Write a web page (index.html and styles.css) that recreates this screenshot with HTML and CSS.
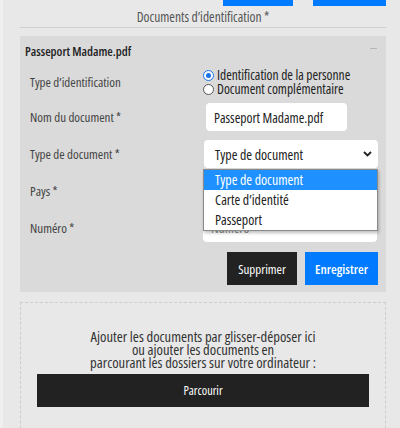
FILE: index.html
```html
<!DOCTYPE html>
<html lang="fr">
<head>
<meta charset="utf-8">
<title>Documents</title>
<link rel="stylesheet" href="styles.css">
</head>
<body>
<div class="page">
  <div class="top-actions">
    <span class="top-btn top-btn-a"></span>
    <span class="top-btn top-btn-b"></span>
  </div>
  <div class="section-title">Documents d’identification *</div>
  <div class="rule"></div>

  <div class="card">
    <div class="card-head">
      <span class="card-name">Passeport Madame.pdf</span>
      <span class="collapse"></span>
    </div>
    <div class="form">
      <div class="row row-radio">
        <div class="label">Type d’identification</div>
        <div class="control radios">
          <label class="radio"><span class="dot checked"></span>Identification de la personne</label>
          <label class="radio"><span class="dot"></span>Document complémentaire</label>
        </div>
      </div>
      <div class="row row-first">
        <div class="label">Nom du document *</div>
        <div class="control"><div class="input input-short">Passeport Madame.pdf</div></div>
      </div>
      <div class="row">
        <div class="label">Type de document *</div>
        <div class="control select-wrap">
          <div class="input select">Type de document
            <svg class="chev" width="9" height="6" viewBox="0 0 9 6"><path d="M1 1 L4.5 4.5 L8 1" fill="none" stroke="#222" stroke-width="1.8"/></svg>
          </div>
          <ul class="dropdown">
            <li class="opt active">Type de document</li>
            <li class="opt">Carte d’identité</li>
            <li class="opt">Passeport</li>
          </ul>
        </div>
      </div>
      <div class="row">
        <div class="label">Pays *</div>
        <div class="control"><div class="input input-full"></div></div>
      </div>
      <div class="row">
        <div class="label">Numéro *</div>
        <div class="control"><div class="input input-full placeholder">Numéro</div></div>
      </div>
    </div>
    <div class="actions">
      <button class="btn btn-dark">Supprimer</button>
      <button class="btn btn-blue">Enregistrer</button>
    </div>
  </div>

  <div class="dropzone">
    <p class="drop-text">Ajouter les documents par glisser-déposer ici<br>ou ajouter les documents en<br>parcourant les dossiers sur votre ordinateur :</p>
    <button class="btn btn-dark btn-wide">Parcourir</button>
  </div>
</div>
</body>
</html>
```

FILE: styles.css
```css
html, body {
  margin: 0;
  padding: 0;
  height: 100%;
  overflow: hidden;
}
body {
  background: #e8e8e8;
  border-left: 3px solid #efefef;
  font-family: "Open Sans", sans-serif;
  font-stretch: 75%;
  font-size: 13.5px;
  color: #333;
}
.page {
  padding: 0 14px 0 17px;
}
.top-actions {
  display: flex;
  justify-content: flex-end;
  gap: 20px;
  height: 6px;
}
.top-btn {
  display: block;
  height: 6px;
  background: #007bff;
}
.top-btn-a { width: 70px; }
.top-btn-b { width: 73px; }
.section-title {
  text-align: center;
  color: #555;
  padding-top: 2px;
  line-height: 19px;
  white-space: nowrap;
}
.rule {
  height: 1px;
  background: #cfcfcf;
}
.card {
  margin-top: 8px;
  background: #dadada;
  padding-bottom: 7px;
}
.card-head {
  display: flex;
  justify-content: space-between;
  align-items: center;
  height: 28px;
  padding: 1px 9px 0 5px;
}
.card-name {
  font-weight: 600;
  color: #222;
  font-size: 12.5px;
  white-space: nowrap;
}
.collapse {
  width: 7px;
  height: 1px;
  background: #b5b5b5;
  margin-top: -6px;
}
.form {
  padding: 3px 9px 0 10px;
}
.row {
  display: flex;
  align-items: center;
  height: 28px;
  margin-top: 9px;
}
.row-radio {
  margin-top: 0;
}
.row-first {
  margin-top: 7px;
}
.label {
  width: 173px;
  flex: none;
  color: #444;
  font-size: 13px;
  white-space: nowrap;
}
.control {
  flex: 1;
}
.radios {
  display: flex;
  flex-direction: column;
}
.radio {
  display: flex;
  align-items: center;
  gap: 3px;
  line-height: 14px;
  color: #222;
  white-space: nowrap;
}
.dot {
  width: 9px;
  height: 9px;
  border: 1px solid #555;
  border-radius: 50%;
  background: #fff;
  box-sizing: content-box;
  position: relative;
  flex: none;
}
.dot.checked {
  border-color: #1a73e8;
}
.dot.checked::after {
  content: "";
  position: absolute;
  left: 2px;
  top: 2px;
  width: 5px;
  height: 5px;
  border-radius: 50%;
  background: #1a73e8;
}
.input {
  height: 28px;
  background: #fff;
  border-radius: 4px;
  display: flex;
  align-items: center;
  padding: 0 8px;
  box-sizing: border-box;
  color: #222;
  white-space: nowrap;
}
.input-short {
  width: 141px;
  margin-left: 3px;
  font-size: 13.6px;
}
.input-full {
  width: 174px;
}
.placeholder {
  color: #888;
}
.select-wrap {
  position: relative;
  height: 28px;
}
.select {
  width: 174px;
  margin-left: 1px;
  justify-content: space-between;
  padding: 0 6px 0 11px;
  font-size: 13.9px;
}
.chev {
  display: block;
}
.dropdown {
  position: absolute;
  left: 0;
  top: 29px;
  width: 173px;
  margin: 0;
  padding: 0;
  list-style: none;
  background: #fff;
  border: 1px solid #8a8a8a;
  box-shadow: 1px 2px 3px rgba(0,0,0,0.25);
  z-index: 2;
}
.opt {
  height: 20px;
  line-height: 20px;
  padding-left: 11px;
  color: #222;
  white-space: nowrap;
  font-size: 13.9px;
}
.opt.active {
  background: #1e90ff;
  color: #fff;
}
.actions {
  display: flex;
  justify-content: flex-end;
  gap: 8px;
  padding: 0 8px 0 0;
  margin-top: 10px;
}
.btn {
  border: 0;
  font-family: inherit;
  font-stretch: 75%;
  font-size: 13px;
  color: #fff;
  height: 33px;
  padding: 0;
  cursor: pointer;
}
.btn-dark {
  background: #222;
  width: 70px;
}
.btn-blue {
  background: #007bff;
  width: 73px;
  font-weight: 600;
  font-size: 13.2px;
}
.dropzone {
  margin-top: 10px;
  border: 1px dashed #cdcdcd;
  border-bottom: 0;
  height: 140px;
  display: flex;
  flex-direction: column;
  align-items: center;
}
.drop-text {
  margin: 27px 0 0;
  text-align: center;
  line-height: 13px;
  font-size: 14.6px;
  color: #333;
  white-space: nowrap;
}
.btn-wide {
  width: 332px;
  margin-top: 5px;
  font-size: 12.3px;
}
```
